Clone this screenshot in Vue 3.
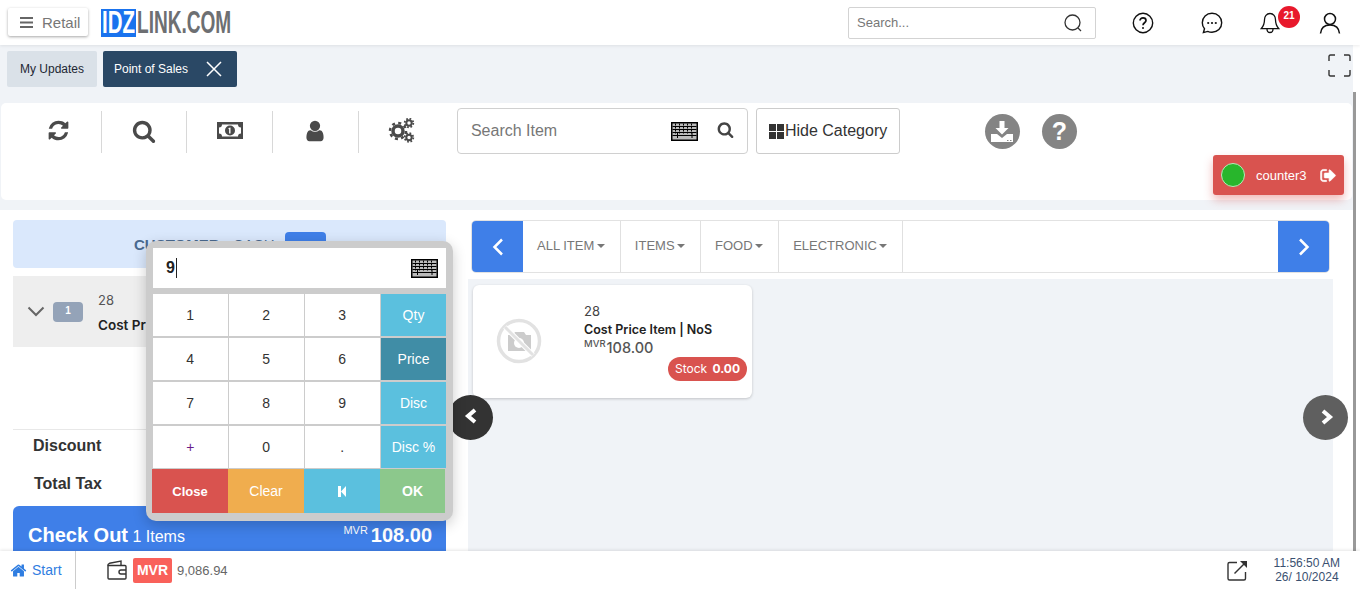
<script setup>
const tools = ['refresh', 'search', 'money', 'user', 'cogs']
const tabs = ['ALL ITEM', 'ITEMS', 'FOOD', 'ELECTRONIC']
const keys = [
  { label: '1' }, { label: '2' }, { label: '3' }, { label: 'Qty', cls: 'info' },
  { label: '4' }, { label: '5' }, { label: '6' }, { label: 'Price', cls: 'info-on' },
  { label: '7' }, { label: '8' }, { label: '9' }, { label: 'Disc', cls: 'info' },
  { label: '+', cls: 'plus' }, { label: '0' }, { label: '.' }, { label: 'Disc %', cls: 'info' },
]
const paths = {
  search: 'M1216 832q0-185-131.5-316.5t-316.5-131.5-316.5 131.5-131.5 316.5 131.5 316.5 316.5 131.5 316.5-131.5 131.5-316.5zm512 832q0 52-38 90t-90 38q-54 0-90-38l-343-342q-179 124-399 124-143 0-273.5-55.5t-225-150-150-225-55.5-273.5 55.5-273.5 150-225 225-150 273.5-55.5 273.5 55.5 225 150 150 225 55.5 273.5q0 220-124 399l343 343q37 37 37 90z',
  user: 'M1536 1399q0 109-62.5 187t-150.5 78h-854q-88 0-150.5-78t-62.5-187q0-85 8.5-160.5t31.5-152 58.5-131 94-89 134.5-34.5q131 128 313 128t313-128q76 0 134.5 34.5t94 89 58.5 131 31.5 152 8.5 160.5zm-256-887q0 159-112.5 271.5t-271.5 112.5-271.5-112.5-112.5-271.5 112.5-271.5 271.5-112.5 271.5 112.5 112.5 271.5z',
  refresh: 'M1639 1056q0 5-1 7-64 268-268 434.5t-478 166.5q-146 0-282.5-55t-243.5-157l-129 129q-19 19-45 19t-45-19-19-45v-448q0-26 19-45t45-19h448q26 0 45 19t19 45-19 45l-137 137q71 66 161 102t187 36q134 0 250-65t186-179q11-17 53-117 8-23 30-23h192q13 0 22.5 9.5t9.5 22.5zm25-800v448q0 26-19 45t-45 19h-448q-26 0-45-19t-19-45 19-45l138-138q-148-137-349-137-134 0-250 65t-186 179q-11 17-53 117-8 23-30 23h-199q-13 0-22.5-9.5t-9.5-22.5v-7q65-268 270-434.5t480-166.5q146 0 284 55.5t245 156.5l130-129q19-19 45-19t45 19 19 45z',
  home: 'M1472 992v480q0 26-19 45t-45 19h-384v-384h-256v384h-384q-26 0-45-19t-19-45v-480q0-1 .5-3t.5-3l575-474 575 474q1 2 1 6zm223-69l-62 74q-8 9-21 11h-3q-13 0-21-7l-692-577-692 577q-12 8-24 7-13-2-21-11l-62-74q-8-10-7-23.5t11-21.5l719-599q32-26 76-26t76 26l244 204v-195q0-14 9-23t23-9h192q14 0 23 9t9 23v408l219 182q10 8 11 21.5t-7 23.5z',
  signout: 'M704 1440q0 4 1 20t.5 26.5-3 23.5-10 19.5-20.5 6.5h-320q-119 0-203.5-84.5t-84.5-203.5v-704q0-119 84.5-203.5t203.5-84.5h320q13 0 22.5 9.5t9.5 22.5q0 4 1 20t.5 26.5-3 23.5-10 19.5-20.5 6.5h-320q-66 0-113 47t-47 113v704q0 66 47 113t113 47h312l11.5 1 11.5 3 8 5.5 7 9 2 13.5zm928-544q0 26-19 45l-544 544q-19 19-45 19t-45-19-19-45v-288h-448q-26 0-45-19t-19-45v-384q0-26 19-45t45-19h448v-288q0-26 19-45t45-19 45 19l544 544q19 19 19 45z',
}
const kbRows = [3.5, 6.5, 9.5]
</script>

<template>
  <div class="page">
    <header class="topbar">
      <button class="retail">
        <svg width="13" height="11" viewBox="0 0 13 11"><path d="M0 0h13v2H0zM0 4.5h13v2H0zM0 9h13v2H0z" fill="#666" /></svg>
        <span>Retail</span>
      </button>
      <div class="logo">
        <div class="logo-box"><span class="logo-idz">IDZ</span></div>
        <span class="logo-link">LINK.COM</span>
      </div>
      <div class="top-search">
        <span>Search...</span>
        <svg width="20" height="20" viewBox="0 0 20 20" fill="none" stroke="#333" stroke-width="1.3"><circle cx="9.5" cy="9.5" r="7.5" /><path d="M15 15l3 3" /></svg>
      </div>
      <div class="top-icons">
        <svg class="ti" width="22" height="22" viewBox="0 0 22 22" fill="none" stroke="#111" stroke-width="1.4">
          <circle cx="11" cy="11" r="9.7" />
          <path d="M8 8.6c0-1.8 1.4-2.8 3-2.8s3 1 3 2.6c0 2.3-3 2.4-3 4.8" stroke-width="1.7" />
          <circle cx="11" cy="16" r="1" fill="#111" stroke="none" />
        </svg>
        <svg class="ti" width="22" height="22" viewBox="0 0 22 22" fill="none" stroke="#111" stroke-width="1.4">
          <path d="M11 1.3c5.5 0 9.7 4 9.7 9.5s-4.200 9.500-9.700 9.500c-1.500 0-3-.3-4.300-.9l-4.300 1.200 1.100-3.800C2.100 15.200 1.300 13.100 1.300 10.800 1.300 5.300 5.500 1.300 11 1.300z" />
          <circle cx="7.200" cy="11" r="1.100" fill="#111" stroke="none" />
          <circle cx="11" cy="11" r="1.100" fill="#111" stroke="none" />
          <circle cx="14.800" cy="11" r="1.100" fill="#111" stroke="none" />
        </svg>
        <div class="bell">
          <svg width="20" height="22" viewBox="0 0 20 22" fill="none" stroke="#111" stroke-width="1.300">
            <path d="M10 1.500c-3.500 0-5.500 2.800-5.500 6.200 0 4.300-.9 6.300-3.300 9h17.600c-2.400-2.700-3.300-4.700-3.300-9 0-3.400-2-6.200-5.500-6.200z" />
            <path d="M7 17c0 2.200 1.300 3.500 3 3.500s3-1.300 3-3.500" />
          </svg>
          <span class="badge">21</span>
        </div>
        <svg class="ti" width="22" height="22" viewBox="0 0 22 22" fill="none" stroke="#111" stroke-width="1.500">
          <circle cx="11" cy="7" r="5.500" />
          <path d="M1.500 21.500c.5-5.500 4-8.500 9.500-8.500s9 3 9.500 8.500" />
        </svg>
      </div>
    </header>

    <div class="tabs">
      <div class="tab">My Updates</div>
      <div class="tab active">
        <span>Point of Sales</span>
        <svg width="16" height="16" viewBox="0 0 16 16" stroke="#fff" stroke-width="1.500"><path d="M1 1l14 14M15 1L1 15" /></svg>
      </div>
      <svg class="expand" width="23" height="23" viewBox="0 0 23 23" fill="none" stroke="#333" stroke-width="1.400">
        <path d="M1 7V2.500Q1 1 2.500 1H7M16 1h4.500Q22 1 22 2.500V7M22 16v4.500q0 1.500-1.500 1.500H16M7 22H2.500Q1 22 1 20.500V16" />
      </svg>
    </div>

    <section class="toolbar">
      <div class="tool-list">
        <div v-for="t in tools" :key="t" class="tool">
          <svg v-if="t === 'refresh'" width="23" height="23" viewBox="0 0 1792 1792" fill="#4a4a4a"><path :d="paths.refresh" /></svg>
          <svg v-else-if="t === 'search'" width="24" height="24" viewBox="0 0 1792 1792" fill="#4a4a4a"><path :d="paths.search" /></svg>
          <svg v-else-if="t === 'user'" width="24" height="24" viewBox="0 0 1792 1792" fill="#4a4a4a"><path :d="paths.user" /></svg>
          <svg v-else-if="t === 'money'" width="26" height="17" viewBox="0 0 26 17">
            <rect width="26" height="17" fill="#4a4a4a" />
            <path d="M5 2.500h16q0 3 3 3v6q-3 0-3 3H5q0-3-3-3v-6q3 0 3-3z" fill="#fff" />
            <circle cx="13" cy="8.500" r="5" fill="#4a4a4a" />
            <path d="M11.500 6l2-.5v6h-1.400V7l-.6.200z" fill="#fff" />
          </svg>
          <svg v-else width="27" height="25" viewBox="0 0 27 25" fill="none" stroke="#4a4a4a">
            <circle cx="10" cy="13" r="5" stroke-width="3.500" />
            <circle cx="10" cy="13" r="8" stroke-width="2.500" stroke-dasharray="3 3.280" />
            <circle cx="21" cy="5" r="2.700" stroke-width="2" />
            <circle cx="21" cy="5" r="4.300" stroke-width="1.800" stroke-dasharray="1.700 1.680" />
            <circle cx="21" cy="19.500" r="2.700" stroke-width="2" />
            <circle cx="21" cy="19.500" r="4.300" stroke-width="1.800" stroke-dasharray="1.700 1.680" />
          </svg>
        </div>
      </div>
      <div class="item-search">
        <span class="item-ph">Search Item</span>
        <svg class="kb" width="27" height="19" viewBox="0 0 27 19">
          <rect width="27" height="19" fill="#000" />
          <rect x="1.500" y="1.500" width="24" height="16" fill="#bbb" />
          <path v-for="y in kbRows" :key="y" :d="`M1.500 ${y + 1}h24`" stroke="#000" stroke-width="1" />
          <path d="M4.500 1.500v10M8.500 1.500v10M12.500 1.500v10M16.500 1.500v10M20.500 1.500v10M6.500 11v6M21 11v6" stroke="#000" stroke-width="1" stroke-dasharray="2 1" />
          <path d="M1.500 13.500h24" stroke="#000" stroke-width="1" />
        </svg>
        <svg class="item-mag" width="17" height="17" viewBox="0 0 1792 1792" fill="#444"><path :d="paths.search" /></svg>
      </div>
      <button class="hide-cat">
        <svg width="15" height="15" viewBox="0 0 15 15" fill="#333"><path d="M0 0h7v7H0zM8 0h7v7H8zM0 8h7v7H0zM8 8h7v7H8z" /></svg>
        <span>Hide Category</span>
      </button>
      <div class="round-icon first">
        <svg width="24" height="24" viewBox="0 0 24 24" fill="#fff">
          <path d="M9.500 1h5v7h4l-6.500 6.500L5.500 8h4z" />
          <path d="M1 14h6l5 4 5-4h6v8H1z" />
          <path d="M17 20h1.500v1H17zM20 20h1.500v1H20z" fill="#888" />
        </svg>
      </div>
      <div class="round-icon">?</div>
    </section>

    <main class="main">
      <div class="left">
        <div class="customer">
          <span class="cust-text"><b>CUSTOMER</b> - CASH</span>
          <span class="cust-btn"></span>
        </div>
        <div class="line-item">
          <svg width="18" height="11" viewBox="0 0 18 11" fill="none" stroke="#666" stroke-width="2"><path d="M1.500 1.500L9 9l7.500-7.500" /></svg>
          <span class="qty">1</span>
          <div class="line-text">
            <div class="code">28</div>
            <div class="name">Cost Price Item | NoS</div>
          </div>
        </div>
        <div class="blank"></div>
        <div class="total discount">Discount</div>
        <div class="total tax">Total Tax</div>
        <div class="checkout">
          <div><b>Check Out</b> <span class="items">1 Items</span></div>
          <div class="amount"><sup>MVR</sup><b>108.00</b></div>
        </div>
      </div>

      <div class="right">
        <nav class="cat-nav">
          <button class="nav-arrow">
            <svg width="12" height="18" viewBox="0 0 12 18" fill="none" stroke="#fff" stroke-width="2.500"><path d="M10 1.500L2.500 9l7.500 7.500" /></svg>
          </button>
          <div v-for="t in tabs" :key="t" class="cat">{{ t }}<i class="caret"></i></div>
          <button class="nav-arrow end">
            <svg width="12" height="18" viewBox="0 0 12 18" fill="none" stroke="#fff" stroke-width="2.500"><path d="M2 1.500L9.500 9 2 16.500" /></svg>
          </button>
        </nav>
        <div class="grid">
          <div class="card">
            <div class="no-photo">
              <svg width="46" height="46" viewBox="0 0 46 46" fill="none">
                <path d="M12 17h5l2-3h9l2 3h5v16H12z" fill="#ccc" />
                <circle cx="23" cy="25" r="5" fill="#fff" />
                <circle cx="23" cy="23" r="20.500" stroke="#e2e2e2" stroke-width="3.500" />
                <path d="M9 9l28 28" stroke="#fff" stroke-width="5" />
                <path d="M9 9l28 28" stroke="#e2e2e2" stroke-width="3" />
              </svg>
            </div>
            <div class="card-text">
              <div class="card-code">28</div>
              <div class="card-name">Cost Price Item | NoS</div>
              <div class="card-price"><sup>MVR</sup>108.00</div>
              <div class="stock">Stock <b>0.00</b></div>
            </div>
          </div>
        </div>
      </div>
    </main>

    <footer class="footer">
      <div class="start">
        <svg width="17" height="17" viewBox="0 0 1792 1792" fill="#2f7de1"><path :d="paths.home" /></svg>
        <span>Start</span>
      </div>
      <svg class="wallet" width="20" height="20" viewBox="0 0 20 20" fill="none" stroke="#333" stroke-width="1.400">
        <path d="M1 5.500h17a1 1 0 0 1 1 1V18a1 1 0 0 1-1 1H2a1 1 0 0 1-1-1z" />
        <path d="M1 5.500L1 5c0-1 .5-1.400 1.500-1.700L14 1v4.500" />
        <path d="M19 10h-5a2 2 0 0 0 0 4h5" />
      </svg>
      <span class="mvr">MVR</span>
      <span class="balance">9,086.94</span>
      <svg class="export" width="21" height="21" viewBox="0 0 21 21" fill="none" stroke="#333" stroke-width="1.400">
        <path d="M10 2.500H2.500a1.500 1.500 0 0 0-1.500 1.500v14.500A1.500 1.500 0 0 0 2.500 20H17a1.500 1.500 0 0 0 1.500-1.500V12" />
        <path d="M7.500 13.500L18 3" />
        <path d="M13 1h7v7z" fill="#333" stroke="none" />
      </svg>
      <div class="clock">
        <div>11:56:50 AM</div>
        <div>26/ 10/2024</div>
      </div>
    </footer>

    <div class="counter">
      <span class="dot"></span>
      <span class="counter-name">counter3</span>
      <svg width="17" height="17" viewBox="0 0 1792 1792" fill="#fff" stroke="#fff" stroke-width="70"><path :d="paths.signout" /></svg>
    </div>

    <button class="pager left-pager">
      <svg width="14" height="16" viewBox="0 0 14 16" fill="none" stroke="#fff" stroke-width="4"><path d="M11 2L4 8l7 6" /></svg>
    </button>
    <button class="pager right-pager">
      <svg width="14" height="16" viewBox="0 0 14 16" fill="none" stroke="#fff" stroke-width="4"><path d="M3 2l7 6-7 6" /></svg>
    </button>

    <div class="numpad">
      <div class="pad-input">
        <span class="pad-value">9</span>
        <svg class="pad-kb" width="27" height="19" viewBox="0 0 27 19">
          <rect width="27" height="19" fill="#000" />
          <rect x="1.500" y="1.500" width="24" height="16" fill="#bbb" />
          <path v-for="y in kbRows" :key="y" :d="`M1.500 ${y + 1}h24`" stroke="#000" stroke-width="1" />
          <path d="M4.500 1.500v10M8.500 1.500v10M12.500 1.500v10M16.500 1.500v10M20.500 1.500v10M6.500 11v6M21 11v6" stroke="#000" stroke-width="1" stroke-dasharray="2 1" />
          <path d="M1.500 13.500h24" stroke="#000" stroke-width="1" />
        </svg>
      </div>
      <div class="pad-keys">
        <div v-for="k in keys" :key="k.label" class="key" :class="k.cls">{{ k.label }}</div>
      </div>
      <div class="pad-actions">
        <div class="act close">Close</div>
        <div class="act clear">Clear</div>
        <div class="act back">
          <svg width="8" height="11" viewBox="0 0 8 11" fill="#fff"><path d="M0 0h3v11H0zM3 5.500L8 0v11z" /></svg>
        </div>
        <div class="act ok">OK</div>
      </div>
    </div>

    <div class="scroll-track"><div class="scroll-thumb"></div></div>
  </div>
</template>

<style>
html, body {
  margin: 0;
  background: #fff;
}
</style>

<style scoped>
* {
  box-sizing: border-box;
}

button {
  font-family: inherit;
}

.page {
  position: relative;
  width: 1360px;
  height: 589px;
  overflow: hidden;
  display: flex;
  flex-direction: column;
  background: #f0f3f7;
  font-family: "Liberation Sans", Arial, sans-serif;
  color: #333;
}

.topbar {
  height: 45px;
  flex: none;
  display: flex;
  align-items: center;
  background: #fff;
  padding-left: 8px;
  box-shadow: 0 1px 3px rgba(0, 0, 0, .08);
  position: relative;
  z-index: 2;
}

.retail {
  width: 80px;
  height: 28px;
  display: flex;
  align-items: center;
  gap: 9px;
  padding: 0 0 0 12px;
  margin-top: -1px;
  background: #fff;
  border: 0;
  border-radius: 2px;
  box-shadow: 0 1px 3px rgba(0, 0, 0, .35);
  font-size: 15px;
  color: #777;
}

.logo {
  display: flex;
  align-items: center;
  margin-left: 13px;
}

.logo-box {
  width: 35px;
  height: 28px;
  background: #1a73ee;
}

.logo-idz,
.logo-link {
  display: block;
  font-size: 31px;
  font-weight: 700;
  line-height: 28px;
  white-space: nowrap;
  transform-origin: left center;
}

.logo-idz {
  color: #fff;
  width: 33px;
  margin-left: 1px;
  transform: scaleX(.66);
}

.logo-link {
  color: #6d6f72;
  width: 95px;
  margin-left: 1px;
  transform: scaleX(.615);
}

.top-search {
  width: 248px;
  height: 32px;
  margin-left: 616px;
  padding: 0 12px 0 8px;
  display: flex;
  align-items: center;
  justify-content: space-between;
  border: 1px solid #d3d3d3;
  border-radius: 2px;
  font-size: 13px;
  color: #777;
}

.top-icons {
  display: flex;
  align-items: center;
  margin-left: 36px;
}

.ti {
  flex: none;
}

.top-icons .ti:nth-child(2) {
  margin-left: 47px;
}

.top-icons .ti:last-child {
  margin-left: 39px;
}

.bell {
  position: relative;
  width: 20px;
  height: 22px;
  margin-left: 37px;
}

.badge {
  position: absolute;
  left: 18px;
  top: -6px;
  width: 22px;
  height: 22px;
  border-radius: 50%;
  background: #e8192c;
  color: #fff;
  font-size: 10px;
  font-weight: 700;
  line-height: 20px;
  text-align: center;
}

.tabs {
  height: 58px;
  flex: none;
  display: flex;
  align-items: flex-start;
  gap: 6px;
  padding: 6px 0 0 7px;
}

.tab {
  height: 36px;
  width: 90px;
  background: #dae1e8;
  border-radius: 2px;
  font-size: 12px;
  line-height: 36px;
  text-align: center;
  color: #1d2733;
}

.tab.active {
  width: 134px;
  padding: 0 15px 0 11px;
  display: flex;
  align-items: center;
  justify-content: space-between;
  background: #2a4865;
  color: #fff;
}

.expand {
  margin: 3px 0 0 1085px;
}

.toolbar {
  height: 97px;
  flex: none;
  display: flex;
  align-items: flex-start;
  margin: 0 8px 10px 1px;
  padding: 5px 0 0 15px;
  background: #fff;
  border-radius: 5px;
}

.tool-list {
  display: flex;
  margin-top: 3px;
}

.tool {
  width: 85.700px;
  height: 42px;
  padding-bottom: 3px;
  display: flex;
  align-items: center;
  justify-content: center;
  border-right: 1px solid #d8d8d8;
}

.tool:last-child {
  border-right: 0;
}

.item-search {
  width: 291px;
  height: 46px;
  margin-left: 12.500px;
  padding: 0 13px 0 13px;
  display: flex;
  align-items: center;
  border: 1px solid #d0d0d0;
  border-radius: 4px;
}

.item-ph {
  flex: 1;
  font-size: 16px;
  color: #777;
}

.kb {
  margin-right: 19px;
}

.item-mag {
  margin-top: -4px;
}

.hide-cat {
  width: 144px;
  height: 46px;
  margin-left: 8px;
  padding: 0 0 0 12px;
  display: flex;
  align-items: center;
  gap: 1px;
  background: #fff;
  border: 1px solid #ccc;
  border-radius: 3px;
  font-size: 16px;
  color: #333;
}

.round-icon {
  width: 35px;
  height: 35px;
  margin: 6px 0 0 22px;
  display: flex;
  align-items: center;
  justify-content: center;
  border-radius: 50%;
  background: #848484;
  color: #fff;
  font-size: 25px;
  font-weight: 700;
}

.round-icon.first {
  margin-left: 85px;
}

.main {
  flex: 1;
  min-height: 0;
  display: flex;
  width: 1353px;
  background: #fff;
  padding-left: 13px;
  overflow: hidden;
}

.left {
  width: 433px;
  flex: none;
  display: flex;
  flex-direction: column;
  padding-top: 10px;
}

.customer {
  height: 48px;
  flex: none;
  display: flex;
  align-items: flex-start;
  gap: 10px;
  padding: 12px 0 0 121px;
  background: #dae8fc;
  border-radius: 4px;
  font-size: 15px;
  color: #4a6a8f;
}

.cust-text {
  margin-top: 4px;
}

.cust-btn {
  width: 41px;
  height: 28px;
  background: #3f7fe8;
  border-radius: 4px;
}

.line-item {
  height: 71px;
  flex: none;
  margin-top: 8px;
  display: flex;
  align-items: center;
  padding-left: 14px;
  background: #eee;
}

.qty {
  width: 30px;
  height: 20px;
  margin-left: 8px;
  background: #94a3b8;
  border-radius: 4px;
  color: #fff;
  font-size: 10px;
  font-weight: 700;
  line-height: 18px;
  text-align: center;
}

.line-text {
  margin-left: 15px;
  padding-top: 2px;
}

.code {
  font-family: Inter, sans-serif;
  font-size: 13px;
  color: #555;
}

.name {
  margin-top: 9px;
  font-family: Inter, sans-serif;
  font-size: 13.500px;
  font-weight: 600;
  color: #222;
}

.blank {
  height: 83px;
  flex: none;
  border-bottom: 1px solid #e8e8e8;
}

.total {
  flex: none;
  font-size: 16px;
  font-weight: 700;
  color: #333;
  line-height: 18px;
}

.discount {
  margin: 7px 0 0 20px;
}

.tax {
  margin: 20px 0 0 21px;
}

.checkout {
  margin-top: 13px;
  flex: 1;
  display: flex;
  justify-content: space-between;
  align-items: flex-start;
  padding: 18px 14px 0 15px;
  background: #3f7fe8;
  border-radius: 6px 6px 0 0;
  color: #fff;
  font-size: 16px;
}

.checkout b {
  font-size: 20px;
}

.items {
  font-size: 16px;
}

.amount sup {
  font-size: 11px;
  vertical-align: 8px;
  line-height: 0;
  margin-right: 3px;
}

.amount {
  line-height: 23px;
}

.right {
  width: 865px;
  margin-left: 22px;
  padding-top: 10px;
  display: flex;
  flex-direction: column;
}

.cat-nav {
  height: 53px;
  flex: none;
  margin: 0 3px;
  display: flex;
  border: 1px solid #e2e2e2;
  border-radius: 5px;
  overflow: hidden;
  background: #fff;
}

.nav-arrow {
  width: 51px;
  flex: none;
  display: flex;
  align-items: center;
  justify-content: center;
  padding: 0;
  border: 0;
  background: #3f7fe8;
}

.nav-arrow.end {
  margin-left: auto;
}

.cat {
  display: flex;
  align-items: center;
  padding: 0 15px 2px 14px;
  border-right: 1px solid #e0e0e0;
  font-size: 13px;
  color: #777;
}

.caret {
  width: 0;
  height: 0;
  margin-left: 2.500px;
  border: 4px solid transparent;
  border-top-color: #777;
  border-bottom: 0;
}

.grid {
  flex: 1;
  margin-top: 6px;
  padding: 6px 0 0 5px;
  background: #f0f3f7;
}

.card {
  width: 279px;
  height: 113px;
  display: flex;
  position: relative;
  background: #fff;
  border-radius: 6px;
  box-shadow: 0 1px 3px rgba(0, 0, 0, .2);
}

.no-photo {
  width: 111px;
  padding: 33px 0 0 23px;
}

.card-text {
  padding-top: 19px;
}

.card-code {
  font-family: Inter, sans-serif;
  font-size: 13px;
  line-height: 15px;
  color: #444;
}

.card-name {
  margin-top: 3px;
  font-family: Inter, sans-serif;
  font-size: 12.500px;
  font-weight: 600;
  line-height: 15px;
  color: #222;
}

.card-price {
  margin-top: 2px;
  font-family: Inter, sans-serif;
  font-size: 14.500px;
  font-weight: 500;
  line-height: 18px;
  color: #555;
}

.card-price sup {
  font-size: 9.500px;
  line-height: 0;
  margin-right: 1px;
}

.stock {
  position: absolute;
  right: 5px;
  bottom: 17px;
  width: 79px;
  height: 24px;
  border-radius: 12px;
  background: #d9534f;
  color: #fff;
  font-family: Inter, sans-serif;
  font-size: 12px;
  line-height: 24px;
  text-align: center;
}

.stock b {
  margin-left: 2px;
}

.footer {
  height: 38px;
  flex: none;
  display: flex;
  align-items: center;
  background: #fff;
  box-shadow: 0 -1px 3px rgba(0, 0, 0, .1);
  position: relative;
  z-index: 4;
}

.start {
  width: 76px;
  height: 38px;
  display: flex;
  align-items: center;
  gap: 5px;
  padding-left: 10px;
  border-right: 1px solid #ccc;
  font-size: 14px;
  color: #2f7de1;
}

.wallet {
  margin-left: 31px;
}

.mvr {
  width: 39px;
  height: 25px;
  margin-left: 6px;
  background: #f9615a;
  border-radius: 2px;
  color: #fff;
  font-size: 14px;
  font-weight: 700;
  line-height: 25px;
  text-align: center;
}

.balance {
  margin-left: 5px;
  font-size: 13px;
  color: #666;
}

.export {
  margin-left: 999px;
}

.clock {
  margin-left: 26px;
  font-size: 12px;
  line-height: 14px;
  text-align: center;
  color: #3a5070;
}

.counter {
  position: absolute;
  left: 1213px;
  top: 155px;
  width: 131px;
  height: 40px;
  display: flex;
  align-items: center;
  padding-left: 8px;
  background: #d9534f;
  border-radius: 3px;
  box-shadow: 0 5px 10px rgba(217, 83, 79, .4);
  color: #fff;
  font-size: 13px;
  z-index: 3;
}

.dot {
  width: 24px;
  height: 24px;
  border-radius: 50%;
  background: #28b62c;
  border: 1px solid #b8e8b8;
}

.counter-name {
  margin: 0 13px 0 11px;
}

.pager {
  position: absolute;
  top: 395px;
  width: 45px;
  height: 45px;
  display: flex;
  align-items: center;
  justify-content: center;
  padding: 0;
  border: 0;
  border-radius: 50%;
  z-index: 3;
}

.left-pager {
  left: 448px;
  background: #333;
  padding-bottom: 3px;
}

.right-pager {
  left: 1303px;
  background: #5f5f5f;
  padding-left: 2px;
  padding-bottom: 2px;
}

.numpad {
  position: absolute;
  left: 146px;
  top: 241px;
  width: 307px;
  height: 280px;
  padding: 7px;
  background: #ccc;
  border-radius: 10px;
  box-shadow: 0 4px 14px rgba(0, 0, 0, .2);
  z-index: 5;
}

.pad-input {
  height: 40px;
  width: 293px;
  display: flex;
  align-items: center;
  justify-content: space-between;
  padding: 0 8px 0 13px;
  background: #fff;
}

.pad-value {
  padding-right: 1px;
  border-right: 1px solid #222;
  font-size: 16px;
  font-weight: 700;
  line-height: 20px;
  color: #222;
}

.pad-keys {
  display: grid;
  grid-template-columns: 74.500px 74.500px 74.500px 65px;
  grid-auto-rows: 42px;
  gap: 2px 1.500px;
  margin-top: 6px;
  width: 293px;
}

.key {
  display: flex;
  align-items: center;
  justify-content: center;
  background: #fff;
  font-size: 14px;
  color: #333;
}

.key.plus {
  color: #6a1b8a;
}

.key.info {
  background: #5bc0de;
  color: #fff;
}

.key.info-on {
  background: #408da6;
  color: #fff;
}

.pad-actions {
  display: grid;
  grid-template-columns: 76px 76px 76px 65px;
  height: 44px;
  width: 293px;
  margin: 1px 0 0 -1px;
}

.act {
  display: flex;
  align-items: center;
  justify-content: center;
  color: #fff;
  font-size: 14px;
}

.close {
  background: #d9534f;
  font-size: 13px;
  font-weight: 700;
}

.clear {
  background: #f0ad4e;
}

.back {
  background: #5bc0de;
}

.ok {
  background: #8cc88c;
  font-weight: 700;
}

.scroll-track {
  position: absolute;
  left: 1353px;
  top: 45px;
  width: 7px;
  height: 506px;
  background: #fff;
  z-index: 1;
}

.scroll-thumb {
  width: 3px;
  height: 459px;
  margin-top: 47px;
  background: #999;
}
</style>
